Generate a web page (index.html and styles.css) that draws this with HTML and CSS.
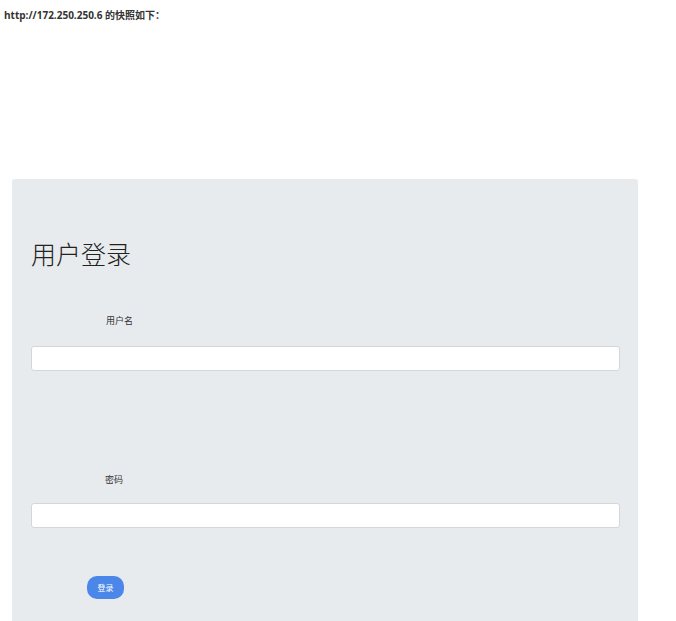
FILE: index.html
```html
<!DOCTYPE html>
<html lang="zh">
<head>
<meta charset="utf-8">
<link rel="stylesheet" href="styles.css">
</head>
<body>
<div class="snap-head">http://172.250.250.6 的快照如下：</div>
<div class="panel">
  <h1 class="title">用户登录</h1>
  <div class="field">
    <label class="label">用户名</label>
    <input class="input" type="text">
  </div>
  <div class="field field-pw">
    <label class="label label-pw">密码</label>
    <input class="input" type="password">
  </div>
  <button class="btn">登录</button>
</div>
</body>
</html>
```
FILE: styles.css
```css
html, body {
  margin: 0;
  padding: 0;
  background: #fff;
}
body {
  font-family: "Open Sans", "Noto Sans CJK SC", sans-serif;
  color: #333;
}
.snap-head {
  font-size: 10px;
  font-weight: 700;
  color: #333;
  padding: 8px 0 0 4px;
  line-height: 14px;
  height: 171px;
}
.panel {
  margin-left: 12px;
  width: 626px;
  height: 460px;
  box-sizing: border-box;
  background: #e8ebee;
  border-radius: 3px;
  padding: 61px 18px 0 19px;
}
.title {
  margin: 0;
  font-family: "Liberation Serif", "Noto Sans CJK SC", serif;
  font-weight: 300;
  font-size: 25px;
  line-height: 32px;
  color: #222;
}
.field {
  display: flex;
  flex-direction: column;
  margin-top: 42px;
}
.field-pw {
  margin-top: 102px;
}
.label {
  font-size: 9px;
  line-height: 14px;
  color: #333;
  margin-left: 75px;
  margin-bottom: 18px;
}
.label-pw {
  margin-left: 74px;
  margin-bottom: 16px;
}
.input {
  box-sizing: border-box;
  width: 589px;
  height: 25px;
  margin: 0;
  border: 1px solid #d3d7db;
  border-radius: 3px;
  background: #fff;
}
.btn {
  display: block;
  margin: 48px 0 0 56px;
  width: 37px;
  height: 23px;
  padding: 0;
  border: none;
  border-radius: 10px;
  background: #4b86e9;
  color: #fff;
  font-family: "Noto Sans CJK SC", sans-serif;
  font-size: 8px;
}
```
